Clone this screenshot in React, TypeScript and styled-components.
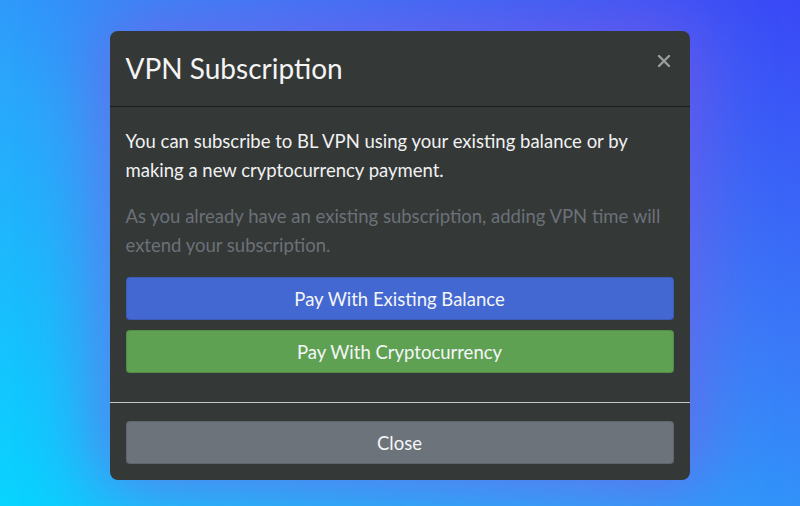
import React from 'react';
import styled, { createGlobalStyle } from 'styled-components';

const GlobalStyle = createGlobalStyle`
    html, body {
        margin: 0;
        padding: 0;
        height: 100%;
    }
    body {
        font-family: Lato, "Open Sans", sans-serif;
    }
    #root {
        min-height: 100%;
    }
`

const Backdrop = styled.div`
    width: 800px;
    height: 506px;
    display: flex;
    justify-content: center;
    align-items: flex-start;
    padding-top: 31px;
    box-sizing: border-box;
    background: linear-gradient(35deg, #08d4ff 0%, #2aa6fb 40%, #3a7cf8 65%, #3a48f6 100%);
    overflow: hidden;
`

const Modal = styled.div`
    width: 580px;
    margin-right: 1px;
    background-color: #343837;
    border-radius: 8px;
    box-shadow: 0 0 70px 12px rgba(132, 84, 226, 0.62);
    color: #f2f2f2;
`

const Header = styled.div`
    display: flex;
    justify-content: space-between;
    align-items: flex-start;
    height: 76px;
    padding: 19px 16px 0;
    box-sizing: border-box;
    border-bottom: 1px solid #1b1d1d;
`

const Title = styled.h5`
    margin: 0;
    font-size: 28px;
    font-weight: 400;
    line-height: 36px;
    color: #f4f4f4;
`

const CloseX = styled.button`
    background: transparent;
    border: none;
    padding: 0;
    margin: 1px 0 0;
    width: 20px;
    height: 20px;
    display: flex;
    align-items: center;
    justify-content: center;
    cursor: pointer;
`

const Body = styled.div`
    padding: 20px 16px 29px;
    border-bottom: 1px solid #c4c6c6;
`

const Text = styled.p<{ $muted?: boolean }>`
    margin: 0 0 18px;
    font-size: 18.5px;
    line-height: 28.6px;
    color: ${p => p.$muted ? '#6b7177' : '#f1f1f1'};
`

const Button = styled.button<{ $bg: string }>`
    display: block;
    width: 100%;
    height: 43px;
    margin-top: 10px;
    border: 1px solid rgba(0, 0, 0, 0.12);
    border-radius: 4px;
    background-color: ${p => p.$bg};
    color: #f4f6f8;
    font-family: Lato, "Open Sans", sans-serif;
    font-size: 18.5px;
    cursor: pointer;

    &:first-of-type {
        margin-top: 0;
    }
`

const Footer = styled.div`
    padding: 18px 16px 16px;
`

const App: React.FunctionComponent = () => {
    return (
        <>
            <GlobalStyle />
            <Backdrop>
                <Modal>
                    <Header>
                        <Title>VPN Subscription</Title>
                        <CloseX aria-label='Close'>
                            <svg width='14' height='14' viewBox='0 0 14 14'>
                                <path d='M2 2 L12 12 M12 2 L2 12' stroke='#9a9d9d' strokeWidth='2.4' strokeLinecap='round' />
                            </svg>
                        </CloseX>
                    </Header>
                    <Body>
                        <Text>You can subscribe to BL VPN using your existing balance or by making a new cryptocurrency payment.</Text>
                        <Text $muted>As you already have an existing subscription, adding VPN time will extend your subscription.</Text>
                        <Button $bg='#4468d1'>Pay With Existing Balance</Button>
                        <Button $bg='#5ea153'>Pay With Cryptocurrency</Button>
                    </Body>
                    <Footer>
                        <Button $bg='#6c737a'>Close</Button>
                    </Footer>
                </Modal>
            </Backdrop>
        </>
    )
}

export default App;
